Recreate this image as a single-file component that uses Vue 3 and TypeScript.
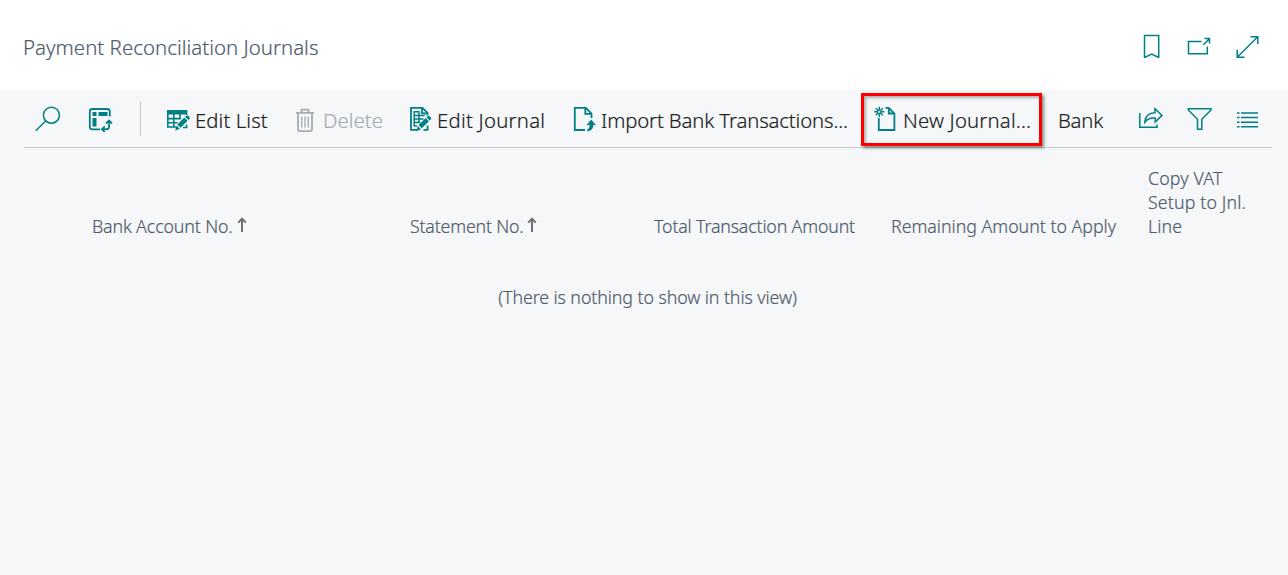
<script setup lang="ts">
interface Column {
  id: string
  label: string
  sorted?: boolean
}

const columns: Column[] = [
  { id: 'account', label: 'Bank Account No.', sorted: true },
  { id: 'statement', label: 'Statement No.', sorted: true },
  { id: 'total', label: 'Total Transaction Amount' },
  { id: 'remaining', label: 'Remaining Amount to Apply' },
  { id: 'vat', label: 'Copy VAT Setup to Jnl. Line' },
]
</script>

<template>
  <main class="page">
    <header class="header">
      <h1 class="title">Payment Reconciliation Journals</h1>
      <nav class="window-actions">
        <svg class="icon" viewBox="0 0 26 26"><path d="M3.5 3.5H17.7V25.5L10.6 22L3.5 25.5Z" /></svg>
        <svg class="icon" viewBox="0 0 26 26">
          <path d="M15.5 9.5H2.5V21.7H21.3V14.5M17.3 12.8L23 7.2M18.5 6.5H23.5V11.5" />
        </svg>
        <svg class="icon" viewBox="0 0 26 26">
          <path d="M1.5 25L21.5 5M14.5 4.8H21.8V12M1.2 17.8V25.2H8.5" />
        </svg>
      </nav>
    </header>

    <section class="content">
      <div class="toolbar">
        <svg class="icon" viewBox="0 0 26 26"><circle cx="16.4" cy="9.2" r="8" /><path d="M10.6 15L.8 24.8" /></svg>
        <svg class="icon" viewBox="0 0 26 26">
          <path class="medium" d="M13 23.3H5.3Q2.8 23.3 2.8 20.8V5.5Q2.8 3 5.3 3H20.3Q22.8 3 22.8 5.5V10.5" />
          <path class="solid" d="M5.5 6H9.5V10H5.5ZM11.5 6H20.5V10H11.5ZM5.5 12H9.5V20.6H5.5Z" />
          <path class="medium" d="M16 23.2H19.5Q22 23.2 22 20.7V15.5M19 17.5L22 14.5L25 17.5M17.8 20.3L15 23.2L17.8 26" />
        </svg>
        <span class="divider"></span>
        <button class="action">
          <svg class="icon" viewBox="0 0 26 26">
            <path class="solid" d="M0 4H20.3V8.5H0Z" />
            <path class="table-grid" d="M.8 5V21H9M.8 12.6H14M.8 16.7H10.5M6.8 8V21M13 8V13.5M19.6 8V9M19.6 18.5V21.5H16" />
            <path class="solid" d="M8.2 24.8L9.5 19.5L12.8 22.8ZM10.3 18.5L17.3 11.5L20.6 14.8L13.6 21.8ZM18 10.8L19.1 9.7Q20.6 8.9 22 10.2Q23.3 11.7 22.4 13L21.3 14.1Z" />
          </svg>
          <span class="label edit-list">Edit List</span>
        </button>
        <button class="action disabled">
          <svg class="icon" viewBox="0 0 26 26">
            <path class="medium" d="M1 6.8H19M6.5 6.5V3.7H13.5V6.5M3 7V23Q3 25.2 5.2 25.2H14.8Q17 25.2 17 23V7" />
            <path class="slats" d="M6.7 10.5V21.5M10 10.5V21.5M13.3 10.5V21.5" />
          </svg>
          <span class="label delete">Delete</span>
        </button>
        <button class="action">
          <svg class="icon journal" viewBox="0 0 26 26">
            <path class="medium" d="M7.5 23.9H1V1.9H12.5L17.5 6.9V9.5M12 2V7.4H17.5M17.6 19.5V23.9H13.5" />
            <path d="M4 5.7H9.5M4 9.4H14.8M4 13H13.5M4 16.5H10.5M4 20H7M4.2 5V20.6M9 5.5V17" />
            <path class="solid" d="M6.5 25.2L7.8 20L11 23.2ZM8.6 19.1L15.7 12L18.9 15.2L11.8 22.3ZM16.4 11.3L17.5 10.2Q19 9.4 20.4 10.7Q21.7 12.2 20.8 13.5L19.7 14.6Z" />
          </svg>
          <span class="label edit-journal">Edit Journal</span>
        </button>
        <button class="action">
          <svg class="icon" viewBox="0 0 26 26">
            <path class="medium" d="M12 24H1.8V1.8H12.8L18.5 7.5V12M12.3 2V7.8H18.3" />
            <path class="solid" d="M13.2 19.5L18.2 13.5L23.2 19.5L20.4 18.8Q20.5 24.8 14.3 25.6V23.5Q16.9 22.6 16.5 18.8Z" />
          </svg>
          <span class="label import">Import Bank Transactions...</span>
        </button>
        <button class="action highlighted">
          <svg class="icon" viewBox="0 0 26 26">
            <path class="medium" d="M4.8 12V24H20.4V7.5L14.8 1.8H11.5M14.8 2V7.5H20.3" />
            <path class="spark" d="M5.3 .7V10.9M.2 5.8H10.4M1.8 2.3L8.8 9.3M8.8 2.3L1.8 9.3" />
            <circle class="cutout" cx="5.3" cy="5.8" r="1.1" />
          </svg>
          <span class="label new-journal">New Journal...</span>
        </button>
        <button class="action"><span class="label bank">Bank</span></button>
        <svg class="icon" viewBox="0 0 26 26">
          <path d="M1.8 7V21.3H19V18.5" />
          <path d="M6.8 16.2Q7.5 7 17 6.8V2.8L24 9.4L17.2 16V12Q10.5 11.2 6.8 16.2Z" />
        </svg>
        <svg class="icon" viewBox="0 0 26 26">
          <path d="M1.3 2.7H24V4L14.8 13.2V23.2H10.5V13.2L1.3 4Z" />
        </svg>
        <svg class="icon" viewBox="0 0 26 26">
          <path d="M1 6.9H3.6M5 6.9H22M1 11.5H3.6M5 11.5H22M1 16.2H3.6M5 16.2H22M1 20.8H3.6M5 20.8H22" />
        </svg>
      </div>

      <div class="columns">
        <div v-for="column in columns" :key="column.id" class="column" :class="column.id">
          <span>{{ column.label }}</span>
          <svg v-if="column.sorted" class="sort" viewBox="0 0 10 16">
            <path d="M5 15V2M1.2 5.6L5 1.7L8.8 5.6" />
          </svg>
        </div>
      </div>
      <p class="empty">(There is nothing to show in this view)</p>
    </section>
  </main>
</template>

<style>
body {
  margin: 0;
  background: #f5f7f9;
}
</style>

<style scoped>
.page {
  height: 575px;
  display: flex;
  flex-direction: column;
  overflow: hidden;
  background: #fff;
  color: #505c6d;
  font-family: "Noto Sans", "Open Sans", sans-serif;
  font-weight: 350;
  -webkit-text-stroke: 0.2px currentColor;
}
.header {
  height: 90px;
  display: flex;
  justify-content: space-between;
  box-sizing: border-box;
  padding: 32px 24px 0 23px;
}
.title {
  margin: 0;
  font-size: 20.4px;
  line-height: 30px;
  font-weight: inherit;
  letter-spacing: 0.03px;
}
.window-actions {
  display: grid;
  grid-template-columns: 45px 50px 28px;
}
.icon {
  display: block;
  flex: none;
  width: 26px;
  height: 26px;
  fill: none;
  stroke: #007f86;
  stroke-width: 1.5;
}
.medium {
  stroke-width: 1.8;
}
.table-grid {
  stroke-width: 1.6;
}
.solid {
  fill: #007f86;
  stroke: none;
}
.slats {
  stroke-width: 1.3;
}
.spark {
  stroke-width: 1.5;
}
.cutout {
  fill: #f5f7f9;
  stroke: none;
}
.content {
  flex: 1;
  background: #f5f7f9;
}
.toolbar {
  height: 58px;
  box-sizing: border-box;
  margin: 0 16px 0 24px;
  padding: 16px 0 0 11px;
  border-bottom: 1px solid #c5c8cb;
  display: grid;
  grid-template-columns: 52px 53px 27px 128px 114px 164px 288px 197px 80px 49px 49px 26px;
  align-items: start;
}
.divider {
  width: 1px;
  height: 35px;
  margin-top: -5px;
  background: #c5c8cb;
}
.action {
  display: flex;
  align-items: flex-start;
  gap: 2px;
  padding: 0;
  border: 0;
  background: none;
  color: #212121;
  font: inherit;
  text-align: left;
}
.label {
  font-size: 20.3px;
  line-height: 28px;
  white-space: nowrap;
}
.edit-list {
  letter-spacing: 0.1px;
}
.delete {
  letter-spacing: 0.05px;
}
.journal {
  margin: 0 -1px 0 1px;
}
.edit-journal {
  letter-spacing: 0.27px;
}
.import {
  letter-spacing: -0.12px;
}
.new-journal {
  margin-left: 1px;
  letter-spacing: 0.2px;
}
.bank {
  letter-spacing: -0.2px;
}
.disabled {
  color: #a4abb5;
}
.disabled .icon {
  stroke: #a4abb5;
}
.highlighted {
  box-sizing: border-box;
  width: 181px;
  height: 53px;
  margin-top: -13px;
  padding: 10px 0 0 10px;
  border: 3px solid #ff0000;
  box-shadow: 2px 2px 3px rgba(0, 0, 0, 0.45), inset 2px 2px 3px rgba(0, 0, 0, 0.3);
}
.columns {
  display: grid;
  grid-template-columns: 318px 222px 223px 261px 1fr;
  align-items: end;
  height: 72px;
  padding: 18px 30px 0 92px;
}
.column {
  display: flex;
  align-items: center;
  font-size: 17.8px;
  line-height: 24px;
  white-space: nowrap;
}
.account {
  letter-spacing: -0.13px;
}
.statement {
  letter-spacing: -0.19px;
}
.total {
  letter-spacing: -0.17px;
}
.remaining {
  letter-spacing: -0.02px;
}
.total,
.remaining {
  justify-content: flex-end;
}
.vat {
  width: 110px;
  margin-left: 32px;
  letter-spacing: 0.14px;
  white-space: normal;
}
.sort {
  width: 10px;
  height: 16px;
  margin: -2px 0 0 4px;
  fill: none;
  stroke: #707070;
  stroke-width: 2;
}
.empty {
  margin: 47px 0 0 7px;
  text-align: center;
  font-size: 17.8px;
  line-height: 24px;
  letter-spacing: -0.08px;
}
</style>
